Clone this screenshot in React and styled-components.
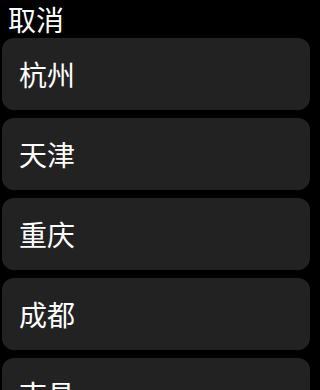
import React from "react";
import styled, { createGlobalStyle } from "styled-components";

const Global = createGlobalStyle`
  html, body { margin: 0; padding: 0; background: #000; }
  body { font-family: "Noto Sans CJK SC", "Noto Sans", sans-serif; color: #fff; overflow: hidden; }
`;

const Screen = styled.div`
  width: 312px;
  height: 390px;
  background: #000;
  overflow: hidden;
`;

const Header = styled.div`
  height: 38px;
  display: flex;
  align-items: center;
  padding-left: 8px;
  font-size: 28px;
  line-height: 1;
  color: #fff;
`;

const List = styled.div`
  display: flex;
  flex-direction: column;
  gap: 8px;
  padding: 0 2px;
`;

const Card = styled.div`
  height: 72px;
  flex-shrink: 0;
  border-radius: 12px;
  background: #222223;
  display: flex;
  align-items: center;
  padding-left: 17px;
  font-size: 28px;
  line-height: 1;
  color: #fff;
`;

const cities = ["杭州", "天津", "重庆", "成都", "南昌"];

export default function App() {
  return (
    <Screen>
      <Global />
      <Header>取消</Header>
      <List>
        {cities.map((c) => (
          <Card key={c}>{c}</Card>
        ))}
      </List>
    </Screen>
  );
}
